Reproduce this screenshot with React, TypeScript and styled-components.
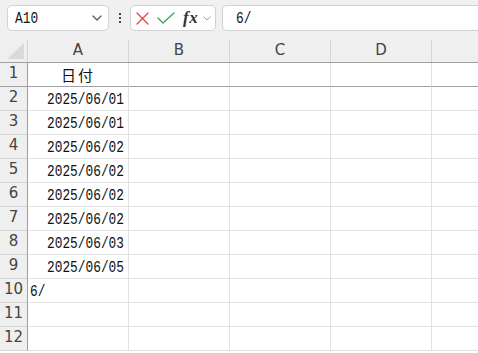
import React from 'react';
import styled, { createGlobalStyle } from 'styled-components';

const GlobalStyle = createGlobalStyle`
  html, body {
    margin: 0;
    padding: 0;
    background: #ffffff;
    overflow: hidden;
  }
`;

const Sheet = styled.div`
  width: 478px;
  height: 353px;
  overflow: hidden;
  background: #ffffff;
  font-family: 'DejaVu Sans', sans-serif;
`;

const Toolbar = styled.div`
  display: flex;
  align-items: flex-start;
  height: 36px;
  padding-top: 5px;
  padding-left: 7px;
  box-sizing: border-box;
  background: #f0f0f0;
`;

const Box = styled.div<{ $width?: number }>`
  display: flex;
  align-items: center;
  flex: ${({ $width }) => ($width ? `0 0 ${$width}px` : '1 1 auto')};
  height: 26px;
  box-sizing: border-box;
  border: 1px solid #d2d2d2;
  border-radius: 5px;
  background: #ffffff;
`;

const NameBox = styled(Box)`
  justify-content: space-between;
  padding: 0 6px 0 7px;
`;

const FormulaInput = styled(Box)`
  margin-left: 6px;
  border-top-right-radius: 0;
  border-bottom-right-radius: 0;
  border-right: none;
  padding-left: 13px;
`;

const ToolBox = styled(Box)`
  padding: 0 0 0 5px;
`;

const Kebab = styled.div`
  flex: 0 0 21px;
  height: 26px;
  display: flex;
  flex-direction: column;
  align-items: center;
  justify-content: center;
  gap: 2px;
`;

const Dot = styled.span`
  width: 2px;
  height: 2px;
  background: #444;
`;

const MonoText = styled.span<{ $origin?: 'left' | 'right'; $drop?: number }>`
  display: inline-block;
  font-family: 'Liberation Mono', monospace;
  font-size: 17px;
  color: #111;
  white-space: nowrap;
  margin-bottom: ${({ $drop }) => -($drop || 0)}px;
  transform: scaleX(0.755);
  transform-origin: ${({ $origin }) => $origin || 'left'} center;
`;

const Fx = styled.span`
  font-family: 'Liberation Serif', serif;
  font-style: italic;
  font-weight: bold;
  font-size: 17px;
  color: #333;
  margin-left: 8px;
  letter-spacing: 0.5px;
`;

const FxChevron = styled.span`
  display: flex;
  margin-left: 5px;
`;

const Grid = styled.div`
  display: grid;
  grid-template-columns: 28px repeat(5, 101px);
`;

const Corner = styled.div`
  height: 27px;
  box-sizing: border-box;
  background: #efefef;
  border-bottom: 1px solid #9f9f9f;
  display: flex;
  align-items: flex-end;
  justify-content: flex-end;
`;

const CornerInner = styled.div`
  width: 28px;
  height: 22px;
  box-sizing: border-box;
  border-right: 1px solid #d4d4d4;
  display: flex;
  align-items: flex-end;
  justify-content: flex-end;
  padding: 0 3px 3px 0;
`;

const ColHeader = styled.div`
  height: 27px;
  box-sizing: border-box;
  background: #efefef;
  border-bottom: 1px solid #9f9f9f;
  display: flex;
  align-items: flex-end;
`;

const ColLabel = styled.div`
  flex: 1;
  height: 22px;
  box-sizing: border-box;
  border-right: 1px solid #d4d4d4;
  display: flex;
  align-items: center;
  justify-content: center;
  padding-bottom: 3px;
  font-size: 15px;
  color: #444;
`;

const RowHeader = styled.div<{ $frozen?: boolean }>`
  height: 24px;
  box-sizing: border-box;
  background: #efefef;
  border-right: 1px solid #9f9f9f;
  border-bottom: 1px solid ${({ $frozen }) => ($frozen ? '#9f9f9f' : '#d4d4d4')};
  display: flex;
  align-items: center;
  justify-content: center;
  padding-bottom: 3px;
  font-size: 15px;
  color: #444;
`;

const Cell = styled.div<{ $frozen?: boolean; $align?: 'left' | 'center' | 'right' }>`
  height: 24px;
  box-sizing: border-box;
  border-right: 1px solid #e1e1e1;
  border-bottom: 1px solid ${({ $frozen }) => ($frozen ? '#9f9f9f' : '#e1e1e1')};
  display: flex;
  align-items: flex-end;
  justify-content: ${({ $align }) =>
    $align === 'right' ? 'flex-end' : $align === 'center' ? 'center' : 'flex-start'};
  padding: 0 4px 0 2px;
  overflow: hidden;
  line-height: 22px;
`;

const HeaderText = styled.span`
  font-family: 'Noto Sans CJK JP', sans-serif;
  font-size: 15px;
  color: #111;
  letter-spacing: 2px;
  padding-left: 2px;
`;

const Chevron: React.FC<{ size?: number; color?: string }> = ({ size = 10, color = '#555' }) => (
  <svg width={size} height={size * 0.6} viewBox="0 0 10 6" fill="none">
    <path d="M1 1l4 4 4-4" stroke={color} strokeWidth="1.2" strokeLinecap="round" strokeLinejoin="round" />
  </svg>
);

const CancelIcon = () => (
  <svg width="13" height="13" viewBox="0 0 13 13" fill="none">
    <path d="M1 1l11 11M12 1L1 12" stroke="#e5484d" strokeWidth="1.4" strokeLinecap="round" />
  </svg>
);

const EnterIcon = () => (
  <svg width="18" height="12" viewBox="0 0 18 12" fill="none" style={{ marginLeft: 8 }}>
    <path d="M1 6l5 5L17 1" stroke="#3ba55c" strokeWidth="1.4" strokeLinecap="round" strokeLinejoin="round" />
  </svg>
);

const columns = ['A', 'B', 'C', 'D', ''];

const cellsA: { text: string; align: 'left' | 'center' | 'right' }[] = [
  { text: '日付', align: 'center' },
  { text: '2025/06/01', align: 'right' },
  { text: '2025/06/01', align: 'right' },
  { text: '2025/06/02', align: 'right' },
  { text: '2025/06/02', align: 'right' },
  { text: '2025/06/02', align: 'right' },
  { text: '2025/06/02', align: 'right' },
  { text: '2025/06/03', align: 'right' },
  { text: '2025/06/05', align: 'right' },
  { text: '6/', align: 'left' },
  { text: '', align: 'left' },
  { text: '', align: 'left' },
];

export default function App() {
  return (
    <Sheet>
      <GlobalStyle />
      <Toolbar>
        <NameBox $width={102}>
          <MonoText>A10</MonoText>
          <Chevron />
        </NameBox>
        <Kebab>
          <Dot />
          <Dot />
          <Dot />
        </Kebab>
        <ToolBox $width={86}>
          <CancelIcon />
          <EnterIcon />
          <Fx>fx</Fx>
          <FxChevron>
            <Chevron size={8} color="#999" />
          </FxChevron>
        </ToolBox>
        <FormulaInput>
          <MonoText>6/</MonoText>
        </FormulaInput>
      </Toolbar>
      <Grid>
        <Corner>
          <CornerInner>
            <svg width="17" height="16" viewBox="0 0 17 16">
              <path d="M17 0V16H0Z" fill="#d9d9d9" />
            </svg>
          </CornerInner>
        </Corner>
        {columns.map((c, i) => (
          <ColHeader key={i}>
            <ColLabel>{c}</ColLabel>
          </ColHeader>
        ))}
        {cellsA.map((cell, r) => (
          <React.Fragment key={r}>
            <RowHeader $frozen={r === 0}>{r + 1}</RowHeader>
            <Cell $frozen={r === 0} $align={cell.align}>
              {r === 0 ? (
                <HeaderText>{cell.text}</HeaderText>
              ) : cell.text ? (
                <MonoText $drop={1} $origin={cell.align === 'right' ? 'right' : 'left'}>
                  {cell.text}
                </MonoText>
              ) : null}
            </Cell>
            {[0, 1, 2, 3].map((k) => (
              <Cell key={k} $frozen={r === 0} />
            ))}
          </React.Fragment>
        ))}
      </Grid>
    </Sheet>
  );
}
